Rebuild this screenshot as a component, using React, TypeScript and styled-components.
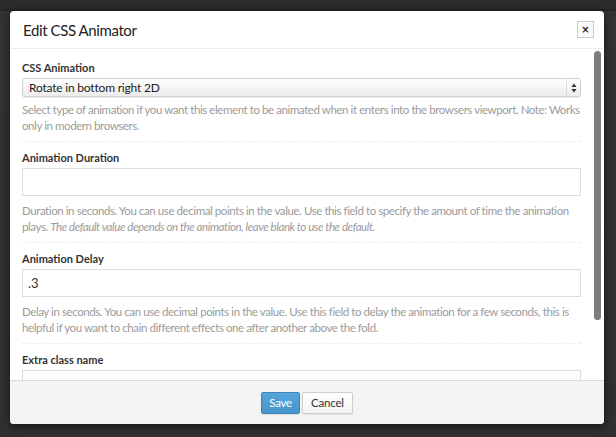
import React from 'react';
import styled, { createGlobalStyle } from 'styled-components';

const GlobalStyle = createGlobalStyle`
  html, body {
    margin: 0;
    padding: 0;
    height: 100%;
    background: #2e2e2e;
    overflow: hidden;
  }
  body {
    font-family: Lato, "Open Sans", "Liberation Sans", sans-serif;
  }
`;

const Page = styled.div`
  width: 616px;
  height: 437px;
  box-sizing: border-box;
  padding: 11px 12px 13px 10px;
  background: linear-gradient(#2c2c2c 0, #2c2c2c 9px, #1f1f1f 10px, #333 11px, #303030 100%);
`;

const Modal = styled.div`
  height: 100%;
  display: flex;
  flex-direction: column;
  background: #fff;
  border-radius: 4px;
  box-shadow: 0 2px 10px rgba(0, 0, 0, 0.6);
  overflow: hidden;
`;

const Header = styled.div`
  height: 37px;
  flex: none;
  display: flex;
  align-items: center;
  justify-content: space-between;
  padding: 0 10px 0 13px;
  border-bottom: 1px solid #ececec;
`;

const Title = styled.h3`
  margin: 0;
  font-size: 15px;
  font-weight: 400;
  color: #222;
  letter-spacing: -0.4px;
`;

const CloseButton = styled.button`
  width: 17px;
  height: 17px;
  padding: 0;
  border: 1px solid #c9c9c9;
  background: #fafafa;
  color: #222;
  font-family: "DejaVu Sans", sans-serif;
  font-size: 10px;
  font-weight: 700;
  line-height: 14px;
  box-shadow: inset 0 1px 0 #fff;
`;

const BodyFrame = styled.div`
  position: relative;
  flex: 1;
  min-height: 0;
  display: flex;
  flex-direction: column;
  overflow: hidden;
`;

const Body = styled.div`
  flex: 1;
  min-height: 0;
  overflow: hidden;
  padding: 0 23px 0 12px;
`;

const ScrollThumb = styled.div`
  position: absolute;
  right: 3px;
  top: 2px;
  width: 7px;
  height: 269px;
  border-radius: 4px;
  background: #7d7d7d;
`;

const Section = styled.div<{ $first?: boolean }>`
  padding: ${(p) => (p.$first ? '11px 0 7px' : '8px 0 7px')};
  border-bottom: 1px dashed #ededed;

  &:last-child {
    border-bottom: none;
  }
`;

const Label = styled.div`
  font-size: 11px;
  font-weight: 700;
  color: #333;
  line-height: 15px;
  margin-bottom: 3px;
`;

const SelectWrap = styled.div`
  position: relative;
  height: 19px;
  box-sizing: border-box;
  border: 1px solid #cfcfcf;
  border-radius: 3px;
  background: linear-gradient(#ffffff, #ececec);
  box-shadow: 0 1px 1px rgba(0, 0, 0, 0.08);
  display: flex;
  align-items: center;
  padding-left: 6px;
  font-size: 12px;
  letter-spacing: -0.2px;
  color: #222;
`;

const Arrows = styled.div`
  position: absolute;
  right: 0;
  top: 0;
  bottom: 0;
  width: 13px;
  border-left: 1px solid #dedede;
  display: flex;
  align-items: center;
  justify-content: center;
`;

const TextInput = styled.div`
  height: 28px;
  box-sizing: border-box;
  border: 1px solid #dcdcdc;
  background: #fff;
  padding: 0 5px;
  display: flex;
  align-items: center;
  font-size: 13px;
  color: #333;
`;

const Help = styled.p<{ $gap?: number }>`
  margin: ${(p) => p.$gap ?? 7}px 0 0;
  font-size: 11.5px;
  letter-spacing: -0.42px;
  line-height: 16px;
  color: #9b9b9b;

  em {
    font-style: italic;
  }
`;

const Footer = styled.div`
  height: 44px;
  flex: none;
  box-sizing: border-box;
  border-top: 1px solid #dadada;
  background: #f4f4f4;
  display: flex;
  align-items: center;
  justify-content: center;
  gap: 2px;
`;

const Button = styled.button<{ $primary?: boolean }>`
  height: 22px;
  box-sizing: border-box;
  padding: 0 ${(p) => (p.$primary ? 7 : 8)}px;
  border-radius: 2px;
  font-family: inherit;
  font-size: 11.5px;
  line-height: 20px;
  letter-spacing: -0.2px;
  border: 1px solid ${(p) => (p.$primary ? '#3b83b8' : '#cdcdcd')};
  background: ${(p) => (p.$primary ? 'linear-gradient(#55a6da, #4695cb)' : 'linear-gradient(#ffffff, #f4f4f4)')};
  color: ${(p) => (p.$primary ? '#fff' : '#333')};
  box-shadow: 0 1px 1px rgba(0, 0, 0, 0.08);
`;

export default function App() {
  return (
    <>
      <GlobalStyle />
      <Page>
        <Modal>
          <Header>
            <Title>Edit CSS Animator</Title>
            <CloseButton>×</CloseButton>
          </Header>
          <BodyFrame>
            <Body>
              <Section $first>
                <Label>CSS Animation</Label>
                <SelectWrap>
                  Rotate in bottom right 2D
                  <Arrows>
                    <svg width="6" height="10" viewBox="0 0 6 10">
                      <path d="M3 0.5 L5.6 4 H0.4 Z M3 9.5 L5.6 6 H0.4 Z" fill="#333" />
                    </svg>
                  </Arrows>
                </SelectWrap>
                <Help $gap={5}>
                  Select type of animation if you want this element to be animated when it enters into the browsers
                  viewport. Note: Works only in modern browsers.
                </Help>
              </Section>
              <Section>
                <Label>Animation Duration</Label>
                <TextInput />
                <Help>
                  Duration in seconds. You can use decimal points in the value. Use this field to specify the amount of
                  time the animation plays.{' '}
                  <em>The default value depends on the animation, leave blank to use the default.</em>
                </Help>
              </Section>
              <Section>
                <Label>Animation Delay</Label>
                <TextInput>.3</TextInput>
                <Help>
                  Delay in seconds. You can use decimal points in the value. Use this field to delay the animation for a
                  few seconds, this is helpful if you want to chain different effects one after another above the fold.
                </Help>
              </Section>
              <Section>
                <Label>Extra class name</Label>
                <TextInput />
                <Help>
                  If you wish to style particular content element differently, then use this field to add a class name
                  and then refer to it in your css file.
                </Help>
              </Section>
            </Body>
            <ScrollThumb />
          </BodyFrame>
          <Footer>
            <Button $primary>Save</Button>
            <Button>Cancel</Button>
          </Footer>
        </Modal>
      </Page>
    </>
  );
}
